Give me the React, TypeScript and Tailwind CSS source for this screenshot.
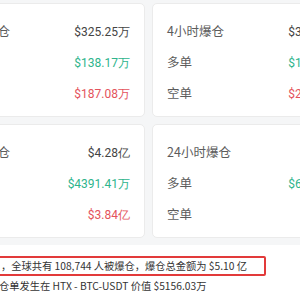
const cards = [
  { title: "1小时爆仓", total: "$325.25万", long: "$138.17万", short: "$187.08万" },
  { title: "4小时爆仓", total: "$325.25万", long: "$138.17万", short: "$245.67万" },
  { title: "8小时爆仓", total: "$4.28亿", long: "$4391.41万", short: "$3.84亿" },
  { title: "24小时爆仓", total: "$5.10亿", long: "$682.76万", short: "$4.46亿" },
];

function Row({ label, value, tone }: { label: string; value: string; tone: string }) {
  return (
    <div className="flex h-[31px] items-center justify-between">
      <span className="text-[12.5px] text-[#5c5c5c]">{label}</span>
      <span className={"text-[12px] font-['Roboto'] " + tone}>{value}</span>
    </div>
  );
}

export default function App() {
  return (
    <div className="h-[300px] w-[300px] overflow-hidden bg-white font-['Noto_Sans_CJK_SC',sans-serif]">
      <div className="bg-[#f5f6f7] pb-[7px] pt-[3px]">
        <div className="ml-[-62px] grid grid-cols-[207px_207px] gap-x-[7px] gap-y-[7px]">
          {cards.map((c) => (
            <div key={c.title} className="rounded-[5px] border border-[#ebebeb] bg-white px-[14px] pb-[7px] pt-[12px]">
              <Row label={c.title} value={c.total} tone="text-[#444]" />
              <Row label="多单" value={c.long} tone="text-[#2eb48c]" />
              <Row label="空单" value={c.short} tone="text-[#e4535c]" />
            </div>
          ))}
        </div>
      </div>
      <div className="mt-[11px] text-[10.25px] text-[#333]">
        <div className="ml-[-10px] w-[276px] rounded-[2px] border-2 border-[#e23a3a] pl-[9px] leading-[16px]">
          ，全球共有 108,744 人被爆仓，爆仓总金额为 $5.10 亿
        </div>
        <div className="ml-[-1px] whitespace-nowrap leading-[20px]">
          仓单发生在 HTX - BTC-USDT 价值 $5156.03万
        </div>
      </div>
    </div>
  );
}
